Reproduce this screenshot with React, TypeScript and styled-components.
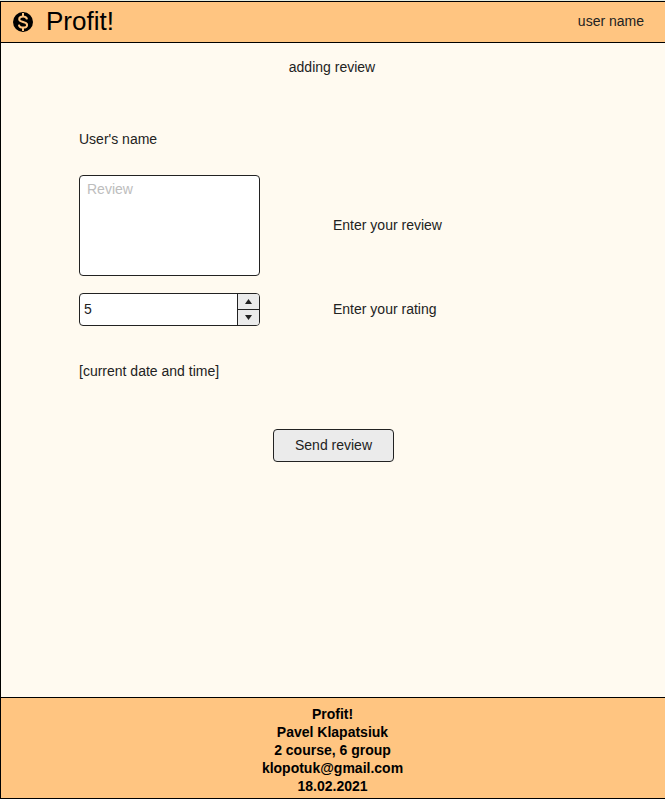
import React from 'react';
import styled, { createGlobalStyle } from 'styled-components';

const GlobalStyle = createGlobalStyle`
  *, *::before, *::after { box-sizing: border-box; }
  body {
    margin: 0;
    background: #e3ebe0;
    font-family: "Liberation Sans", Arial, sans-serif;
    font-size: 14px;
    line-height: 18px;
    color: #222;
  }
`;

const Page = styled.div`
  display: flex;
  flex-direction: column;
  height: 798px;
  margin-top: 1px;
  border: 1px solid #000;
  border-right: 0;
  background: #fffaf0;
`;

const Header = styled.header`
  display: flex;
  align-items: center;
  height: 41px;
  padding: 0 21px 0 10px;
  border-bottom: 1px solid #000;
  background: #ffc581;
`;

const Logo = styled.svg`
  width: 24px;
  height: 24px;
  fill: none;
  stroke: #ffc581;
  stroke-width: 2;
  circle { fill: #000; stroke: none; }
`;

const Brand = styled.h1`
  margin: 0 auto 2px 11px;
  font-size: 26px;
  font-weight: 400;
  line-height: 32px;
  color: #000;
`;

const UserName = styled.span`
  margin-bottom: 2px;
`;

const Main = styled.main`
  flex: 1;
  padding-top: 15px;
`;

const Title = styled.h2`
  margin: 0;
  padding-right: 2px;
  font-size: 14px;
  font-weight: 400;
  text-align: center;
`;

const Form = styled.form`
  display: grid;
  grid-template-columns: 181px auto;
  grid-template-rows: 45px 118px 69px 18px;
  column-gap: 73px;
  align-items: start;
  margin: 54px 0 0 78px;
`;

const WideText = styled.p`
  margin: 0;
  grid-column: 1 / -1;
`;

const Hint = styled.label<{ $height: number }>`
  line-height: ${(p) => p.$height}px;
`;

const ReviewField = styled.textarea`
  display: block;
  width: 181px;
  height: 101px;
  padding: 4px 7px;
  border: 1px solid #222;
  border-radius: 4px;
  background: #fff;
  resize: none;
  outline: none;
  overflow: hidden;
  font: inherit;
  color: inherit;
  &::placeholder { color: #bdbdbd; opacity: 1; }
`;

const Stepper = styled.div`
  display: grid;
  grid-template-columns: 1fr 22px;
  height: 33px;
  border: 1px solid #222;
  border-radius: 4px;
  background: #fff;
  overflow: hidden;
`;

const Rating = styled.input`
  min-width: 0;
  padding: 0 4px 1px;
  border: 0;
  outline: none;
  background: transparent;
  font: inherit;
  color: inherit;
`;

const Arrows = styled.div`
  display: grid;
  grid-template-rows: 16px 15px;
  border-left: 1px solid #222;
  background: #ebebeb;
`;

const ArrowButton = styled.button<{ $divided?: boolean }>`
  display: flex;
  align-items: center;
  justify-content: center;
  padding: 0;
  border: 0;
  border-bottom: ${(p) => (p.$divided ? '1px solid #222' : '0')};
  background: transparent;
  svg { width: 7px; height: 5px; fill: #222; }
`;

const Submit = styled.button`
  display: block;
  width: 121px;
  height: 33px;
  margin: 49px 0 0 272px;
  padding: 0 0 1px;
  border: 1px solid #222;
  border-radius: 4px;
  background: #ebebeb;
  font: inherit;
  color: inherit;
`;

const Footer = styled.footer`
  height: 101px;
  padding: 7px 1px 0 0;
  border-top: 1px solid #000;
  background: #ffc581;
  font-weight: 700;
  text-align: center;
  color: #000;
`;

const footerLines = ['Profit!', 'Pavel Klapatsiuk', '2 course, 6 group', 'klopotuk@gmail.com', '18.02.2021'];

export default function App() {
  return (
    <>
      <GlobalStyle />
      <Page>
        <Header>
          <Logo viewBox="0 0 24 24" aria-hidden="true">
            <circle cx="12" cy="12" r="10" />
            <path d="M12 3v3.5M12 17.5V21M16 9.3C15.7 7.5 14.2 6.6 12.1 6.6 9.8 6.6 8.2 7.6 8.2 9.2c0 1.8 1.8 2.3 3.9 2.8 2.3.5 4 1.1 4 2.9 0 1.7-1.7 2.7-4 2.7-2.4 0-4-1-4.2-3" />
          </Logo>
          <Brand>Profit!</Brand>
          <UserName>user name</UserName>
        </Header>
        <Main>
          <Title>adding review</Title>
          <Form>
            <WideText>User's name</WideText>
            <ReviewField id="review" placeholder="Review" />
            <Hint htmlFor="review" $height={101}>Enter your review</Hint>
            <Stepper>
              <Rating id="rating" defaultValue="5" />
              <Arrows>
                <ArrowButton type="button" $divided aria-label="Increase">
                  <svg viewBox="0 0 7 5"><path d="M3.5 0 7 5H0z" /></svg>
                </ArrowButton>
                <ArrowButton type="button" aria-label="Decrease">
                  <svg viewBox="0 0 7 5"><path d="M0 0h7L3.5 5z" /></svg>
                </ArrowButton>
              </Arrows>
            </Stepper>
            <Hint htmlFor="rating" $height={33}>Enter your rating</Hint>
            <WideText>[current date and time]</WideText>
          </Form>
          <Submit type="button">Send review</Submit>
        </Main>
        <Footer>
          {footerLines.map((line) => <div key={line}>{line}</div>)}
        </Footer>
      </Page>
    </>
  );
}
